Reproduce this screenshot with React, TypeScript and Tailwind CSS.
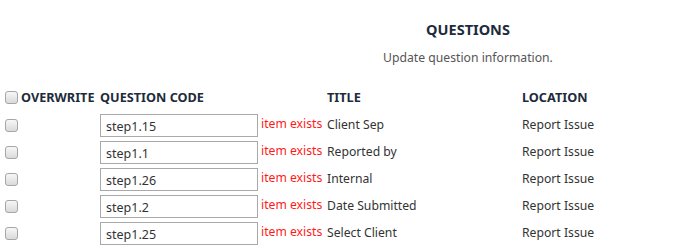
const rows = [
  { code: "step1.15", title: "Client Sep", location: "Report Issue" },
  { code: "step1.1", title: "Reported by", location: "Report Issue" },
  { code: "step1.26", title: "Internal", location: "Report Issue" },
  { code: "step1.2", title: "Date Submitted", location: "Report Issue" },
  { code: "step1.25", title: "Select Client", location: "Report Issue" },
];

function Box() {
  return (
    <input
      type="checkbox"
      className="appearance-none w-[13px] h-[13px] rounded-[3px] border border-[#a6a6a6] bg-linear-to-b from-[#f7f7f7] to-[#dadada] shrink-0"
    />
  );
}

export default function App() {
  return (
    <div
      className="w-[681px] h-[247px] bg-white text-[12.2px] text-[#333]"
      style={{ fontFamily: '"Segoe UI", "Noto Sans", "Open Sans", sans-serif' }}
    >
      {/* heading */}
      <div className="pl-[255px] pt-[17px] text-center">
        <h1 className="text-[14.5px] font-bold text-[#1e2b3c] leading-[24px]">QUESTIONS</h1>
        <p className="mt-[8px] text-[#555] leading-[18px]">Update question information.</p>
      </div>

      {/* header row */}
      <div className="mt-[21px] grid grid-cols-[100px_227px_195px_1fr] items-center h-[20px] font-bold text-[12.7px] text-[#1e2b3c]">
        <div className="flex items-center gap-[3px] pl-[5px]">
          <Box />
          <span>OVERWRITE</span>
        </div>
        <div>QUESTION CODE</div>
        <div>TITLE</div>
        <div>LOCATION</div>
      </div>

      {/* rows */}
      <div className="mt-[6px] flex flex-col gap-[4px]">
        {rows.map((r) => (
          <div key={r.code} className="grid grid-cols-[100px_161px_66px_195px_1fr] items-center h-[23px]">
            <div className="pl-[5px] flex">
              <Box />
            </div>
            <input
              readOnly
              value={r.code}
              className="w-[158px] h-[23px] border border-[#a9a9a9] px-[5px] pt-[2px] text-[12.5px] text-[#333] outline-none"
            />
            <div className="text-[#ff1a1a] -mt-[3px]">item exists</div>
            <div>{r.title}</div>
            <div>{r.location}</div>
          </div>
        ))}
      </div>
    </div>
  );
}
